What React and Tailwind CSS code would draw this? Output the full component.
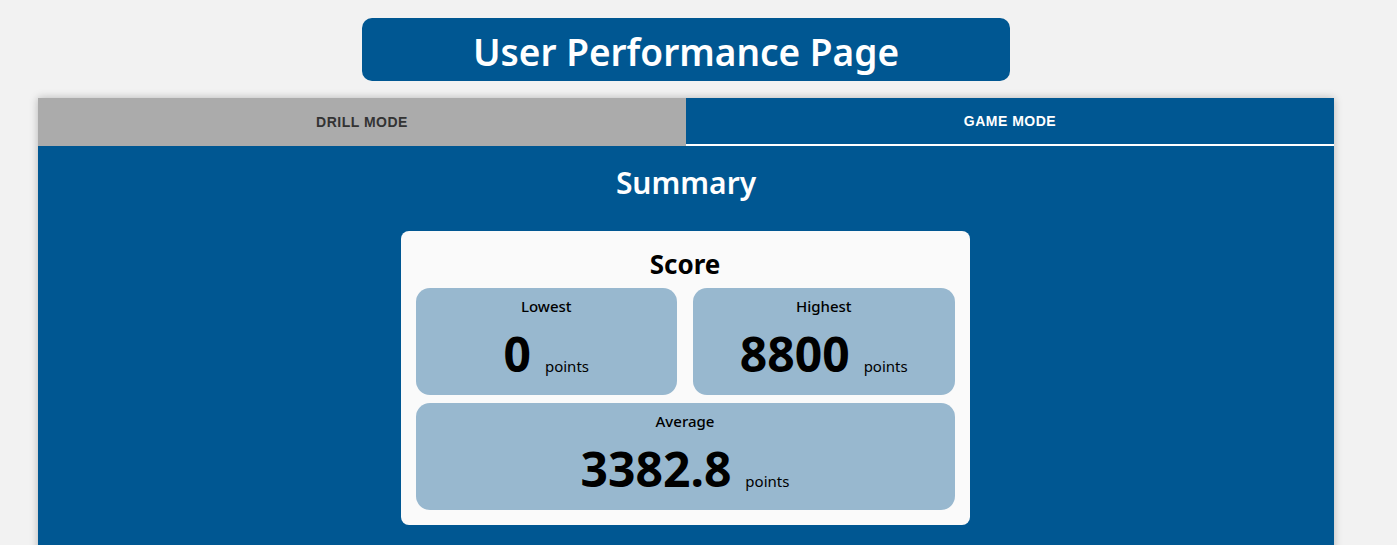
export default function App() {
    const font = { fontFamily: '"Noto Sans", "Open Sans", sans-serif' };
    return (
        <div className="min-h-screen bg-[#f2f2f2] overflow-hidden" style={font}>
            <div className="w-[1372px] flex flex-col items-center pt-[18px]">

                {/* Page title */}
                <div className="w-[648px] h-[63px] bg-[#005792] rounded-[10px] flex items-center justify-center pt-[3px]">
                    <h1 className="text-[37px] font-semibold text-white leading-none">User Performance Page</h1>
                </div>

                {/* Tabs + panel */}
                <div className="w-[1296px] mt-[17px] shadow-[0_0_8px_rgba(0,0,0,0.25)]">
                    <div className="flex h-[48px]" style={{ fontFamily: '"Liberation Sans", Arial, sans-serif' }}>
                        <button className="flex-1 bg-[#ababab] text-[#333333] text-[14px] font-bold tracking-[0.5px] uppercase">
                            Drill Mode
                        </button>
                        <button className="flex-1 bg-[#005792] text-white text-[14px] font-bold tracking-[0.5px] uppercase border-b-2 border-white pt-[1px]">
                            Game Mode
                        </button>
                    </div>

                    <div className="bg-[#005792] h-[420px] flex flex-col items-center pt-[18px]">
                        <h2 className="text-[30px] font-semibold text-white leading-tight">Summary</h2>

                        <div className="w-[569px] mt-[29px] -translate-x-[1px] bg-[#fafafa] rounded-[8px] px-[15px] pt-[17px] pb-[15px]">
                            <h3 className="text-center text-[26px] font-bold text-black leading-tight mb-[8px]">Score</h3>
                            <div className="grid grid-cols-2 gap-x-[16px] gap-y-[8px]">
                                <StatBox label="Lowest" value="0" />
                                <StatBox label="Highest" value="8800" />
                                <div className="col-span-2">
                                    <StatBox label="Average" value="3382.8" />
                                </div>
                            </div>
                        </div>
                    </div>
                </div>
            </div>
        </div>
    );
}

function StatBox({ label, value }) {
    return (
        <div className="h-[107px] bg-[#98b8cf] rounded-[14px] flex flex-col items-center pt-[9px]">
            <p className="text-[15px] font-medium text-black leading-tight">{label}</p>
            <div className="flex items-baseline gap-[14px] mt-[14px]">
                <span className="text-[48px] font-bold text-black leading-none">{value}</span>
                <span className="text-[15px] text-black">points</span>
            </div>
        </div>
    );
}
